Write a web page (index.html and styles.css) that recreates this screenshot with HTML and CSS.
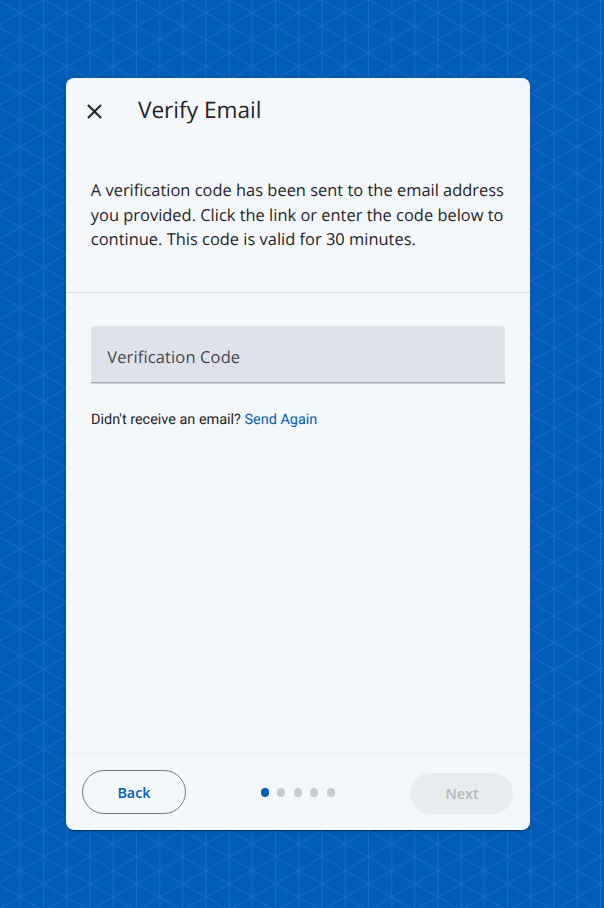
FILE: index.html
```html
<!DOCTYPE html>
<html lang="en">
<head>
<meta charset="utf-8">
<title>Verify Email</title>
<link rel="stylesheet" href="styles.css">
</head>
<body>
<svg class="backdrop" aria-hidden="true">
  <defs>
    <pattern id="mesh" width="46.4" height="26.8" patternUnits="userSpaceOnUse" patternTransform="translate(20.4 12.8)">
      <path d="M0 0V26.8M23.2 0V26.8M46.4 0V26.8M0 0L46.4 26.8M0 26.8L46.4 0" />
    </pattern>
  </defs>
  <rect width="100%" height="100%" fill="url(#mesh)" />
</svg>
<main class="card">
  <header class="card-header">
    <button class="close" aria-label="Close">
      <svg viewBox="0 0 24 24"><path d="M19 6.41 17.59 5 12 10.59 6.41 5 5 6.41 10.59 12 5 17.59 6.41 19 12 13.41 17.59 19 19 17.59 13.41 12z"/></svg>
    </button>
    <h1 class="title">Verify Email</h1>
  </header>
  <p class="intro">A verification code has been sent to the email address<br>you provided. Click the link or enter the code below to<br>continue. This code is valid for 30 minutes.</p>
  <section class="content">
    <div class="field"><span class="field-label">Verification Code</span></div>
    <p class="resend">Didn't receive an email? <a class="link">Send Again</a></p>
  </section>
  <footer class="card-footer">
    <button class="btn btn-back">Back</button>
    <div class="dots"><i class="dot dot-active"></i><i class="dot"></i><i class="dot"></i><i class="dot"></i><i class="dot"></i></div>
    <button class="btn btn-next" disabled>Next</button>
  </footer>
</main>
</body>
</html>
```
FILE: styles.css
```css
* { box-sizing: border-box; }
body {
  margin: 0;
  height: 908px;
  overflow: hidden;
  display: flex;
  justify-content: center;
  align-items: flex-start;
  padding-top: 78px;
  padding-right: 8px;
  background: #005eb9;
  font-family: "Open Sans", sans-serif;
  color: #1f2326;
  text-rendering: geometricPrecision;
}
.backdrop { position: absolute; inset: 0; width: 100%; height: 100%; }
.backdrop path { stroke: #fff; stroke-opacity: .1; stroke-width: 1; fill: none; }
.card {
  position: relative;
  display: flex;
  flex-direction: column;
  width: 464px;
  height: 752.4px;
  border-radius: 8px;
  background: #f4f8fb;
  box-shadow: 0 2px 1px -1px rgba(0,0,0,.2), 0 1px 1px rgba(0,0,0,.14), 0 1px 4px rgba(0,0,0,.25);
}
.card-header { display: flex; align-items: center; height: 66px; padding-left: 16.4px; }
.close { width: 25px; height: 25px; padding: 0; border: 0; background: none; }
.close svg { display: block; width: 25px; height: 25px; fill: #1f2326; }
.title { margin: -2px 0 0 30.5px; font-size: 22.65px; font-weight: 400; line-height: 32px; }
.intro {
  margin: 0;
  height: 149px;
  padding: 34px 24px 0 24.8px;
  border-bottom: 1px solid #d5d9de;
  font-size: 16.46px;
  line-height: 24.6px;
}
.content { flex: 1; padding: 33px 25px 0; }
.field {
  display: flex;
  align-items: center;
  height: 57px;
  padding: 4px 16.2px 0;
  border-radius: 4px 4px 0 0;
  border-bottom: 1px solid #a4a7b0;
  background: #dfe2eb;
  box-shadow: 0 1px 0 #d3d6dd;
}
.field-label { font-size: 16.5px; letter-spacing: .13px; color: #45474e; }
.resend { margin: 27px 0 0; font: 14.45px/20px Roboto, sans-serif; }
.link { color: #005eb9; }
.card-footer {
  display: flex;
  align-items: center;
  justify-content: space-between;
  height: 77px;
  padding: 0 16.5px 0 16px;
  border-top: 1px solid #ebeff2;
}
.btn {
  width: 104px;
  height: 44px;
  padding: 0;
  border-radius: 22px;
  font: 600 14.4px "Open Sans", sans-serif;
}
.btn-back { border: 1px solid #74777f; background: none; color: #005eb9; }
.btn-next { width: 103px; height: 41px; margin-top: 2px; border: 0; background: #e8ecef; color: #b2b7bb; }
.dots { height: 8.4px; margin-right: 1px; }
.dots svg { display: block; }
.dots { display: flex; gap: 8.1px; }
.dot { width: 8.4px; height: 8.4px; border-radius: 50%; background: #c8ccd0; }
.dot-active { background: #005eb9; }
```
